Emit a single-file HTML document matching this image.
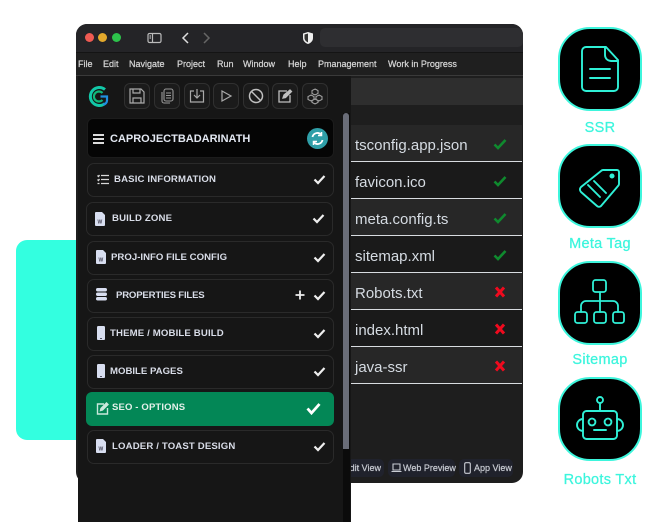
<!DOCTYPE html>
<html><head><meta charset="utf-8"><style>
*{box-sizing:border-box}
html,body{margin:0;padding:0;background:#fff}
body{width:663px;height:522px;position:relative;overflow:hidden;font-family:"Liberation Sans",sans-serif}
.a{position:absolute}
.menu span{position:absolute;top:0;font-size:9px;line-height:24px;color:#d4d4d4;-webkit-text-stroke:.25px #d4d4d4;white-space:nowrap}
.tb{position:absolute;top:83px;width:26px;height:26px;border:1px solid #303030;border-radius:6px;background:#1b1b1b}
.tb svg{position:absolute;left:3px;top:3px}
.it{position:absolute;left:87px;width:247px;height:34px;background:#161616;border:1px solid #2a2a2a;border-radius:7px}
.it b{position:absolute;top:0;line-height:32px;font-size:9.6px;color:#d9dde8;white-space:nowrap;letter-spacing:.15px}
.it svg{position:absolute}
.row{position:absolute;left:351px;width:171px;height:37px;border-bottom:1px solid #d8dce0;color:#d5dbe2;font-size:15px;line-height:41px;padding-left:4px;white-space:nowrap}
.row svg{position:absolute;left:142px;top:13px}
.ic{position:absolute;left:558px;width:84px;height:84px;background:#000;border:2px solid #3df5dc;border-radius:32px}
.ic svg{position:absolute;left:0;top:0}
.lb{position:absolute;left:540px;width:120px;text-align:center;color:#3cf5dd;-webkit-text-stroke:.25px #3cf5dd;font-size:14.5px;line-height:18px;letter-spacing:.3px}
.bt{position:absolute;top:459px;height:18px;background:#20222c;border-radius:5px;color:#c9ccd3;font-size:9px;-webkit-text-stroke:.2px #c9ccd3;line-height:18px;white-space:nowrap}
</style></head><body>
<div class="a" style="left:16px;top:240px;width:80px;height:200px;background:#33ffe0;border-radius:11px"></div>

<div class="a" style="left:76px;top:24px;width:447px;height:459px;background:#1e1e1e;border-radius:11px;overflow:hidden">
 <div class="a" style="left:0;top:0;width:447px;height:28px;background:#242427"></div>
 <div class="a" style="left:0;top:28px;width:447px;height:24px;background:#1f1f1f;border-top:1px solid #141414;border-bottom:1px solid #3a3a3a"></div>
 <div class="a" style="left:275px;top:54px;width:172px;height:27px;background:#2e2e2e"></div>
 <div class="a" style="left:244px;top:4px;width:203px;height:19px;background:#2e2e31;border-radius:5px"></div>
</div>
<div class="a" style="left:85px;top:33px;width:9px;height:9px;border-radius:50%;background:#ee5a52"></div>
<div class="a" style="left:98px;top:33px;width:9px;height:9px;border-radius:50%;background:#e3a92c"></div>
<div class="a" style="left:112px;top:33px;width:9px;height:9px;border-radius:50%;background:#2dc24b"></div>
<svg class="a" style="left:147px;top:32px" width="16" height="12" viewBox="0 0 16 12" fill="none" stroke="#bbb" stroke-width="1.2"><rect x="1" y="1.5" width="13" height="9" rx="1.5"/><path d="M5.5 1.5v9M2.500 4h1.500M2.500 6h1.500"/></svg>
<svg class="a" style="left:179px;top:31px" width="34" height="14" viewBox="0 0 34 14" fill="none" stroke-width="1.5"><path d="M9 2L4 7l5 5" stroke="#ddd"/><path d="M25 2l5 5-5 5" stroke="#666"/></svg>
<svg class="a" style="left:302px;top:31px" width="12" height="14" viewBox="0 0 12 14"><path d="M6 1l5 1.500V7c0 3-2.300 5-5 6-2.700-1-5-3-5-6V2.500z" fill="#eee"/><path d="M6 2.500L2.500 3.500V7c0 2 1.500 3.500 3.500 4.400z" fill="#333"/></svg>

<div class="menu a" style="left:76px;top:52px;width:447px;height:24px">
<span style="left:2px">File</span><span style="left:27px">Edit</span><span style="left:53px">Navigate</span><span style="left:101px">Project</span><span style="left:141px">Run</span><span style="left:167px">Window</span><span style="left:212px">Help</span><span style="left:242px">Pmanagement</span><span style="left:312px">Work in Progress</span>
</div>

<!-- sidebar -->
<div class="a" style="left:78px;top:76px;width:273px;height:446px;background:#161616"></div>
<div class="a" style="left:343px;top:113px;width:7px;height:409px;background:#0b0b0b"></div>
<div class="a" style="left:343px;top:113px;width:6px;height:336px;background:#6a6d78;border-radius:3px 3px 0 0"></div>

<svg class="a" style="left:88px;top:85px" width="22" height="23" viewBox="0 0 22 23" fill="none"><path d="M17 4.500A9 9 0 1 0 17 18.500" stroke="#12c8a8" stroke-width="3"/><path d="M14.500 8A5 5 0 1 0 14.500 15" stroke="#10b87a" stroke-width="2.200"/><path d="M12.500 11.500h6.500v4a4 4 0 0 1-4 4" stroke="#1f8fe0" stroke-width="2.200"/></svg>

<div class="tb" style="left:124px"><svg width="18" height="18" viewBox="0 0 18 18" fill="none" stroke="#aaa" stroke-width="1.200"><path d="M2 2h11l3 3v11H2z"/><path d="M5 2v4h7V2M5 16v-5h8v5"/></svg></div>
<div class="tb" style="left:154px"><svg width="18" height="18" viewBox="0 0 18 18" fill="none" stroke="#999" stroke-width="1.100"><rect x="6" y="2" width="9" height="12" rx="2"/><path d="M8 6h5M8 8.500h5M8 11h5M4 5v9a2 2 0 0 0 2 2h6"/></svg></div>
<div class="tb" style="left:184px"><svg width="18" height="18" viewBox="0 0 18 18" fill="none" stroke="#aaa" stroke-width="1.200"><path d="M6 4H2.500v11h13V4H12M9 2v9M6 8l3 3 3-3"/></svg></div>
<div class="tb" style="left:213px"><svg width="18" height="18" viewBox="0 0 18 18" fill="none" stroke="#aaa" stroke-width="1.200"><path d="M5 4l9 5-9 5z"/></svg></div>
<div class="tb" style="left:243px"><svg width="18" height="18" viewBox="0 0 18 18" fill="none" stroke="#c0c0c0" stroke-width="1.500"><circle cx="9" cy="9" r="6.500"/><path d="M4.500 4.500l9 9"/></svg></div>
<div class="tb" style="left:272px"><svg width="18" height="18" viewBox="0 0 18 18" fill="none" stroke="#c0c0c0" stroke-width="1.300"><path d="M11 4H3v11h11V8"/><path d="M7 11l1-3 6-5 1.500 1.500-6 6z" fill="#c0c0c0"/></svg></div>
<div class="tb" style="left:302px"><svg width="18" height="18" viewBox="0 0 18 18" fill="none" stroke="#aaa" stroke-width="1"><path d="M9 2l3 1.500v3L9 8 6 6.500v-3zM5 8l3 1.500v3L5 14l-3-1.500v-3zM13 8l3 1.500v3L13 14l-3-1.500v-3zM9 12l3 1.500v2L9 17l-3-1.500v-2z"/></svg></div>

<!-- header -->
<div class="a" style="left:87px;top:118px;width:247px;height:40px;background:#050505;border:1px solid #1c1c1c;border-radius:6px"></div>
<div class="a" style="left:93px;top:134px;width:11px;height:2px;background:#dcdcdc;box-shadow:0 4px 0 #dcdcdc,0 8px 0 #dcdcdc"></div>
<div class="a" style="left:110px;top:131px;font-size:11px;font-weight:bold;color:#e3e8f2;line-height:16px;white-space:nowrap">CAPROJECTBADARINATH</div>
<div class="a" style="left:307px;top:128px;width:21px;height:21px;border-radius:50%;background:#2f9fa8"></div>
<svg class="a" style="left:310px;top:131px" width="15" height="15" viewBox="0 0 15 15" fill="none" stroke="#fff" stroke-width="1.800"><path d="M2.500 6A5 5 0 0 1 11 3.500M12.500 9A5 5 0 0 1 4 11.500"/><path d="M11.500 1v3.500H8M3.500 14v-3.500H7" stroke-width="1.500"/></svg>

<!-- items -->
<div class="it" style="top:163px"><svg style="left:9px;top:10px" width="12" height="11" viewBox="0 0 12 11" fill="none" stroke="#d8d8d8" stroke-width="1.300"><path d="M4 1.500h8M4 5.500h8M4 9.500h8M.5 1.500l1 1 1-1.500M.5 5.500l1 1 1-1.500M.5 9.500h2"/></svg><b style="left:26px">BASIC INFORMATION</b><svg style="left:225px;top:10px" width="13" height="11" viewBox="0 0 13 11" fill="none" stroke="#eee" stroke-width="2.200"><path d="M1.500 5.500l3.500 3.500 6.500-7"/></svg></div>

<div class="it" style="top:202px;left:86px"><svg style="left:8px;top:9px" width="10" height="14" viewBox="0 0 10 14"><path d="M0 1a1 1 0 0 1 1-1h6l3 3v10a1 1 0 0 1-1 1H1a1 1 0 0 1-1-1z" fill="#d8def0"/><text x="2.500" y="11.500" font-size="5" font-weight="bold" fill="#445" font-family="Liberation Sans">W</text></svg><b style="left:25px">BUILD ZONE</b><svg style="left:225px;top:10px" width="13" height="11" viewBox="0 0 13 11" fill="none" stroke="#eee" stroke-width="2.200"><path d="M1.500 5.500l3.500 3.500 6.500-7"/></svg></div>

<div class="it" style="top:241px"><svg style="left:8px;top:8px" width="10" height="14" viewBox="0 0 10 14"><path d="M0 1a1 1 0 0 1 1-1h6l3 3v10a1 1 0 0 1-1 1H1a1 1 0 0 1-1-1z" fill="#d8def0"/><text x="2.500" y="11.500" font-size="5" font-weight="bold" fill="#445" font-family="Liberation Sans">W</text></svg><b style="left:23px;letter-spacing:.02px">PROJ-INFO FILE CONFIG</b><svg style="left:225px;top:10px" width="13" height="11" viewBox="0 0 13 11" fill="none" stroke="#eee" stroke-width="2.200"><path d="M1.500 5.500l3.500 3.500 6.500-7"/></svg></div>

<div class="it" style="top:279px"><svg style="left:8px;top:8px" width="11" height="13" viewBox="0 0 11 13" fill="#d8def0"><rect y="0" width="11" height="3.500" rx="1.700"/><rect y="4.500" width="11" height="3.500" rx="1.700"/><rect y="9" width="11" height="3.500" rx="1.700"/></svg><b style="left:28px;letter-spacing:-.2px">PROPERTIES FILES</b><svg style="left:207px;top:10px" width="10" height="10" viewBox="0 0 10 10" stroke="#eee" stroke-width="1.800"><path d="M5 .5v9M.5 5h9"/></svg><svg style="left:225px;top:10px" width="13" height="11" viewBox="0 0 13 11" fill="none" stroke="#eee" stroke-width="2.200"><path d="M1.500 5.500l3.500 3.500 6.500-7"/></svg></div>

<div class="it" style="top:317px"><svg style="left:9px;top:8px" width="8" height="14" viewBox="0 0 8 14"><rect width="8" height="14" rx="1.300" fill="#d8def0"/><rect x="3" y="12" width="2" height="1" fill="#556"/></svg><b style="left:22px">THEME / MOBILE BUILD</b><svg style="left:225px;top:10px" width="13" height="11" viewBox="0 0 13 11" fill="none" stroke="#eee" stroke-width="2.200"><path d="M1.500 5.500l3.500 3.500 6.500-7"/></svg></div>

<div class="it" style="top:355px"><svg style="left:9px;top:8px" width="8" height="14" viewBox="0 0 8 14"><rect width="8" height="14" rx="1.300" fill="#d8def0"/><rect x="3" y="12" width="2" height="1" fill="#556"/></svg><b style="left:22px;letter-spacing:0">MOBILE PAGES</b><svg style="left:225px;top:10px" width="13" height="11" viewBox="0 0 13 11" fill="none" stroke="#eee" stroke-width="2.200"><path d="M1.500 5.500l3.500 3.500 6.500-7"/></svg></div>

<div class="a" style="left:86px;top:392px;width:248px;height:34px;background:#038756;border-radius:6px"></div>
<svg class="a" style="left:96px;top:402px" width="13" height="13" viewBox="0 0 13 13" fill="none" stroke="#c9e8dc" stroke-width="1.400"><path d="M8 2H1.500v10h10V6"/><path d="M4.500 8.500l.5-2L10.500 1 12 2.500 6.500 8z" fill="#c9e8dc"/></svg>
<div class="a" style="left:112px;top:400px;font-size:9.500px;font-weight:bold;line-height:16px;color:#e4f0ea;letter-spacing:.15px;white-space:nowrap">SEO - OPTIONS</div>
<svg class="a" style="left:306px;top:402px" width="15" height="13" viewBox="0 0 15 13" fill="none" stroke="#fff" stroke-width="2.800"><path d="M1.500 6.500l4 4.500 8-9"/></svg>

<div class="it" style="top:430px"><svg style="left:8px;top:8px" width="10" height="14" viewBox="0 0 10 14"><path d="M0 1a1 1 0 0 1 1-1h6l3 3v10a1 1 0 0 1-1 1H1a1 1 0 0 1-1-1z" fill="#d8def0"/><text x="2.500" y="11.500" font-size="5" font-weight="bold" fill="#445" font-family="Liberation Sans">W</text></svg><b style="left:24px">LOADER / TOAST DESIGN</b><svg style="left:225px;top:10px" width="13" height="11" viewBox="0 0 13 11" fill="none" stroke="#eee" stroke-width="2.200"><path d="M1.500 5.500l3.500 3.500 6.500-7"/></svg></div>

<!-- rows -->
<div class="row" style="top:125px;background:#272727">tsconfig.app.json<svg width="14" height="12" viewBox="0 0 14 12" fill="none" stroke="#0f8a2e" stroke-width="2.600"><path d="M1.500 6.500l3.500 3.500 7.500-8"/></svg></div>
<div class="row" style="top:162px;background:#1a1a1a">favicon.ico<svg width="14" height="12" viewBox="0 0 14 12" fill="none" stroke="#0f8a2e" stroke-width="2.600"><path d="M1.500 6.500l3.500 3.500 7.500-8"/></svg></div>
<div class="row" style="top:199px;background:#272727">meta.config.ts<svg width="14" height="12" viewBox="0 0 14 12" fill="none" stroke="#0f8a2e" stroke-width="2.600"><path d="M1.500 6.500l3.500 3.500 7.500-8"/></svg></div>
<div class="row" style="top:236px;background:#1a1a1a">sitemap.xml<svg width="14" height="12" viewBox="0 0 14 12" fill="none" stroke="#0f8a2e" stroke-width="2.600"><path d="M1.500 6.500l3.500 3.500 7.500-8"/></svg></div>
<div class="row" style="top:273px;background:#272727">Robots.txt<svg width="14" height="12" viewBox="0 0 14 12" fill="none" stroke="#f00a1e" stroke-width="3"><path d="M3 1.500l8 9M11 1.500l-8 9"/></svg></div>
<div class="row" style="top:310px;background:#1a1a1a">index.html<svg width="14" height="12" viewBox="0 0 14 12" fill="none" stroke="#f00a1e" stroke-width="3"><path d="M3 1.500l8 9M11 1.500l-8 9"/></svg></div>
<div class="row" style="top:347px;background:#272727">java-ssr<svg width="14" height="12" viewBox="0 0 14 12" fill="none" stroke="#f00a1e" stroke-width="3"><path d="M3 1.500l8 9M11 1.500l-8 9"/></svg></div>

<!-- bottom buttons -->
<div class="bt" style="left:351px;width:33px;border-radius:0 5px 5px 0;overflow:hidden"><span style="position:absolute;right:3px">dit View</span></div>
<div class="bt" style="left:388px;width:67px;padding-left:15px">Web Preview<svg class="a" style="left:3px;top:4px" width="11" height="10" viewBox="0 0 11 10" fill="none" stroke="#c9ccd3" stroke-width="1.100"><path d="M2 1h7v6H2zM.5 8.500h10"/></svg></div>
<div class="bt" style="left:459px;width:54px;padding-left:15px">App View<svg class="a" style="left:5px;top:3px" width="7" height="12" viewBox="0 0 7 12" fill="none" stroke="#c9ccd3" stroke-width="1.100"><rect x=".7" y=".7" width="5.600" height="10.600" rx="1.300"/></svg></div>

<!-- right icons -->
<div class="ic" style="top:27px"><svg width="80" height="80" viewBox="2 2 80 80" fill="none" stroke="#2ff0d6" stroke-width="1.900" stroke-linejoin="round" stroke-linecap="round"><path d="M28 20h20l12 13v27a4 4 0 0 1-4 4H28a4 4 0 0 1-4-4V24a4 4 0 0 1 4-4z"/><path d="M47 20v8a6 6 0 0 0 6 6h7M32 42h20M32 51h20"/></svg></div>
<div class="ic" style="top:144px"><svg width="80" height="80" viewBox="2 2 80 80" fill="none" stroke="#2ff0d6" stroke-width="1.900" stroke-linejoin="round" stroke-linecap="round"><path d="M23 43L43 27a3 3 0 0 1 2-1h14a2 2 0 0 1 2 2v12a3 3 0 0 1-1 2L43 62a3 3 0 0 1-4 0L23 48a3.500 3.500 0 0 1 0-5z"/><circle cx="54" cy="32" r="1.600" fill="#2ff0d6"/><path d="M30 41l12 12M36 37l12 12"/></svg></div>
<div class="ic" style="top:261px"><svg width="80" height="80" viewBox="2 2 80 80" fill="none" stroke="#2ff0d6" stroke-width="1.800" stroke-linejoin="round" stroke-linecap="round"><rect x="35" y="19" width="13" height="12" rx="2.500"/><rect x="17" y="51" width="12" height="11" rx="2.500"/><rect x="36" y="51" width="12" height="11" rx="2.500"/><rect x="55" y="51" width="11" height="11" rx="2.500"/><path d="M42 31v20M23 51v-6a5 5 0 0 1 5-5h27a5 5 0 0 1 5 5v6"/></svg></div>
<div class="ic" style="top:377px"><svg width="80" height="80" viewBox="2 2 80 80" fill="none" stroke="#2ff0d6" stroke-width="1.900" stroke-linejoin="round" stroke-linecap="round"><circle cx="42" cy="23" r="3"/><path d="M42 26v8"/><rect x="25" y="34" width="34" height="28" rx="3.500"/><circle cx="34" cy="45" r="3.400"/><circle cx="50" cy="45" r="3.400"/><path d="M36 53h12M25 42a5.500 5.500 0 0 0 0 12M59 42a5.500 5.500 0 0 1 0 12"/></svg></div>

<div class="lb" style="top:119px">SSR</div>
<div class="lb" style="top:235px">Meta Tag</div>
<div class="lb" style="top:351px">Sitemap</div>
<div class="lb" style="top:471px">Robots Txt</div>
</body></html>
